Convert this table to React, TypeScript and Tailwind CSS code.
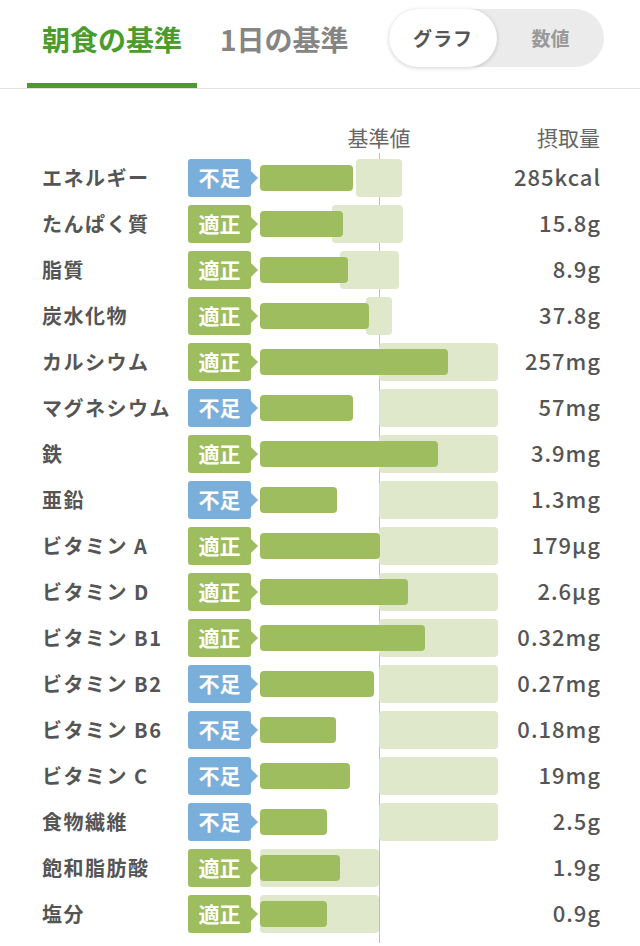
import React from "react";

type Row = {
  name: string;
  status: "不足" | "適正";
  bar: number; // green bar width, px
  refLeft: number; // reference box offset in track, px
  refWidth: number;
  value: string;
};

const rows: Row[] = [
  { name: "エネルギー", status: "不足", bar: 93, refLeft: 96, refWidth: 46, value: "285kcal" },
  { name: "たんぱく質", status: "適正", bar: 83, refLeft: 72, refWidth: 71, value: "15.8g" },
  { name: "脂質", status: "適正", bar: 88, refLeft: 80, refWidth: 59, value: "8.9g" },
  { name: "炭水化物", status: "適正", bar: 109, refLeft: 106, refWidth: 26, value: "37.8g" },
  { name: "カルシウム", status: "適正", bar: 188, refLeft: 119, refWidth: 119, value: "257mg" },
  { name: "マグネシウム", status: "不足", bar: 93, refLeft: 119, refWidth: 119, value: "57mg" },
  { name: "鉄", status: "適正", bar: 178, refLeft: 119, refWidth: 119, value: "3.9mg" },
  { name: "亜鉛", status: "不足", bar: 77, refLeft: 119, refWidth: 119, value: "1.3mg" },
  { name: "ビタミン A", status: "適正", bar: 120, refLeft: 119, refWidth: 119, value: "179µg" },
  { name: "ビタミン D", status: "適正", bar: 148, refLeft: 119, refWidth: 119, value: "2.6µg" },
  { name: "ビタミン B1", status: "適正", bar: 165, refLeft: 119, refWidth: 119, value: "0.32mg" },
  { name: "ビタミン B2", status: "不足", bar: 114, refLeft: 119, refWidth: 119, value: "0.27mg" },
  { name: "ビタミン B6", status: "不足", bar: 76, refLeft: 119, refWidth: 119, value: "0.18mg" },
  { name: "ビタミン C", status: "不足", bar: 90, refLeft: 119, refWidth: 119, value: "19mg" },
  { name: "食物繊維", status: "不足", bar: 67, refLeft: 119, refWidth: 119, value: "2.5g" },
  { name: "飽和脂肪酸", status: "適正", bar: 80, refLeft: 0, refWidth: 119, value: "1.9g" },
  { name: "塩分", status: "適正", bar: 67, refLeft: 0, refWidth: 119, value: "0.9g" },
];

function Badge({ status }: { status: Row["status"] }) {
  const low = status === "不足";
  return (
    <div className="relative flex h-[38px] w-[63px] shrink-0 items-center justify-center">
      <div
        className={`flex h-full w-full items-center justify-center rounded-[3px] text-[21px] font-bold text-white ${
          low ? "bg-[#7aafdc]" : "bg-[#9ebd5e]"
        }`}
      >
        {status}
      </div>
      {/* 右側の矢印 */}
      <svg className="absolute -right-[8px] top-1/2 -translate-y-1/2" width="9" height="16" viewBox="0 0 9 16">
        <path d="M0 0 L8 8 L0 16 Z" fill={low ? "#7aafdc" : "#9ebd5e"} />
      </svg>
    </div>
  );
}

export default function App() {
  return (
    <div
      className="min-h-[946px] w-[640px] bg-white text-[#555]"
      style={{ fontFamily: '"Noto Sans CJK JP", "Noto Sans", sans-serif' }}
    >
      {/* タブ */}
      <div className="flex h-[89px] items-start border-b border-[#e2e2e2] pl-[27px] pr-[36px]">
        <div className="flex h-[88px] items-center border-b-[5px] border-[#4a9c2d] px-[15px] pb-[5px] text-[28px] font-bold text-[#4a9c2d]">
          朝食の基準
        </div>
        <div className="ml-[8px] flex h-[88px] items-center px-[15px] pb-[10px] text-[28px] font-bold text-[#858585]">
          1日の基準
        </div>
        <div className="ml-auto mt-[9px] flex h-[58px] w-[215px] rounded-full bg-[#ebebeb]">
          <div className="flex w-[108px] items-center justify-center rounded-full bg-white text-[19px] font-bold tracking-[1px] text-[#555] shadow-[0_1px_4px_rgba(0,0,0,0.18)]">
            グラフ
          </div>
          <div className="flex flex-1 items-center justify-center text-[19px] font-bold text-[#999]">
            数値
          </div>
        </div>
      </div>

      {/* グラフ */}
      <div className="relative pt-[34px]">
        <div className="flex h-[30px] items-center pr-[40px]">
          <div className="w-[379px]" />
          <div className="-ml-[40px] w-[80px] text-center text-[21px] text-[#666]">基準値</div>
          <div className="flex-1 text-right text-[21px] text-[#666]">摂取量</div>
        </div>

        <div className="absolute bottom-0 left-[379px] top-[64px] w-px bg-black/25" />

        <div className="mt-[6px] flex flex-col gap-[8px] pb-[10px]">
          {rows.map((row) => (
            <div key={row.name} className="flex h-[38px] items-center pl-[42px] pr-[39px]">
              <div className="w-[146px] shrink-0 whitespace-nowrap text-[20px] font-bold tracking-[1.5px] text-[#555]">
                {row.name}
              </div>
              <Badge status={row.status} />
              <div className="relative ml-[9px] h-[38px] w-[238px] shrink-0">
                <div
                  className="absolute top-0 h-[38px] rounded-[4px] bg-[#dfe8cb]"
                  style={{ left: row.refLeft, width: row.refWidth }}
                />
                <div
                  className="absolute left-0 top-[6px] h-[26px] rounded-[4px] bg-[#9ebd5e]"
                  style={{ width: row.bar }}
                />
              </div>
              <div className="flex-1 pb-[3px] text-right text-[22px] font-medium tracking-[1px] text-[#555]">
                {row.value}
              </div>
            </div>
          ))}
        </div>
      </div>
    </div>
  );
}
